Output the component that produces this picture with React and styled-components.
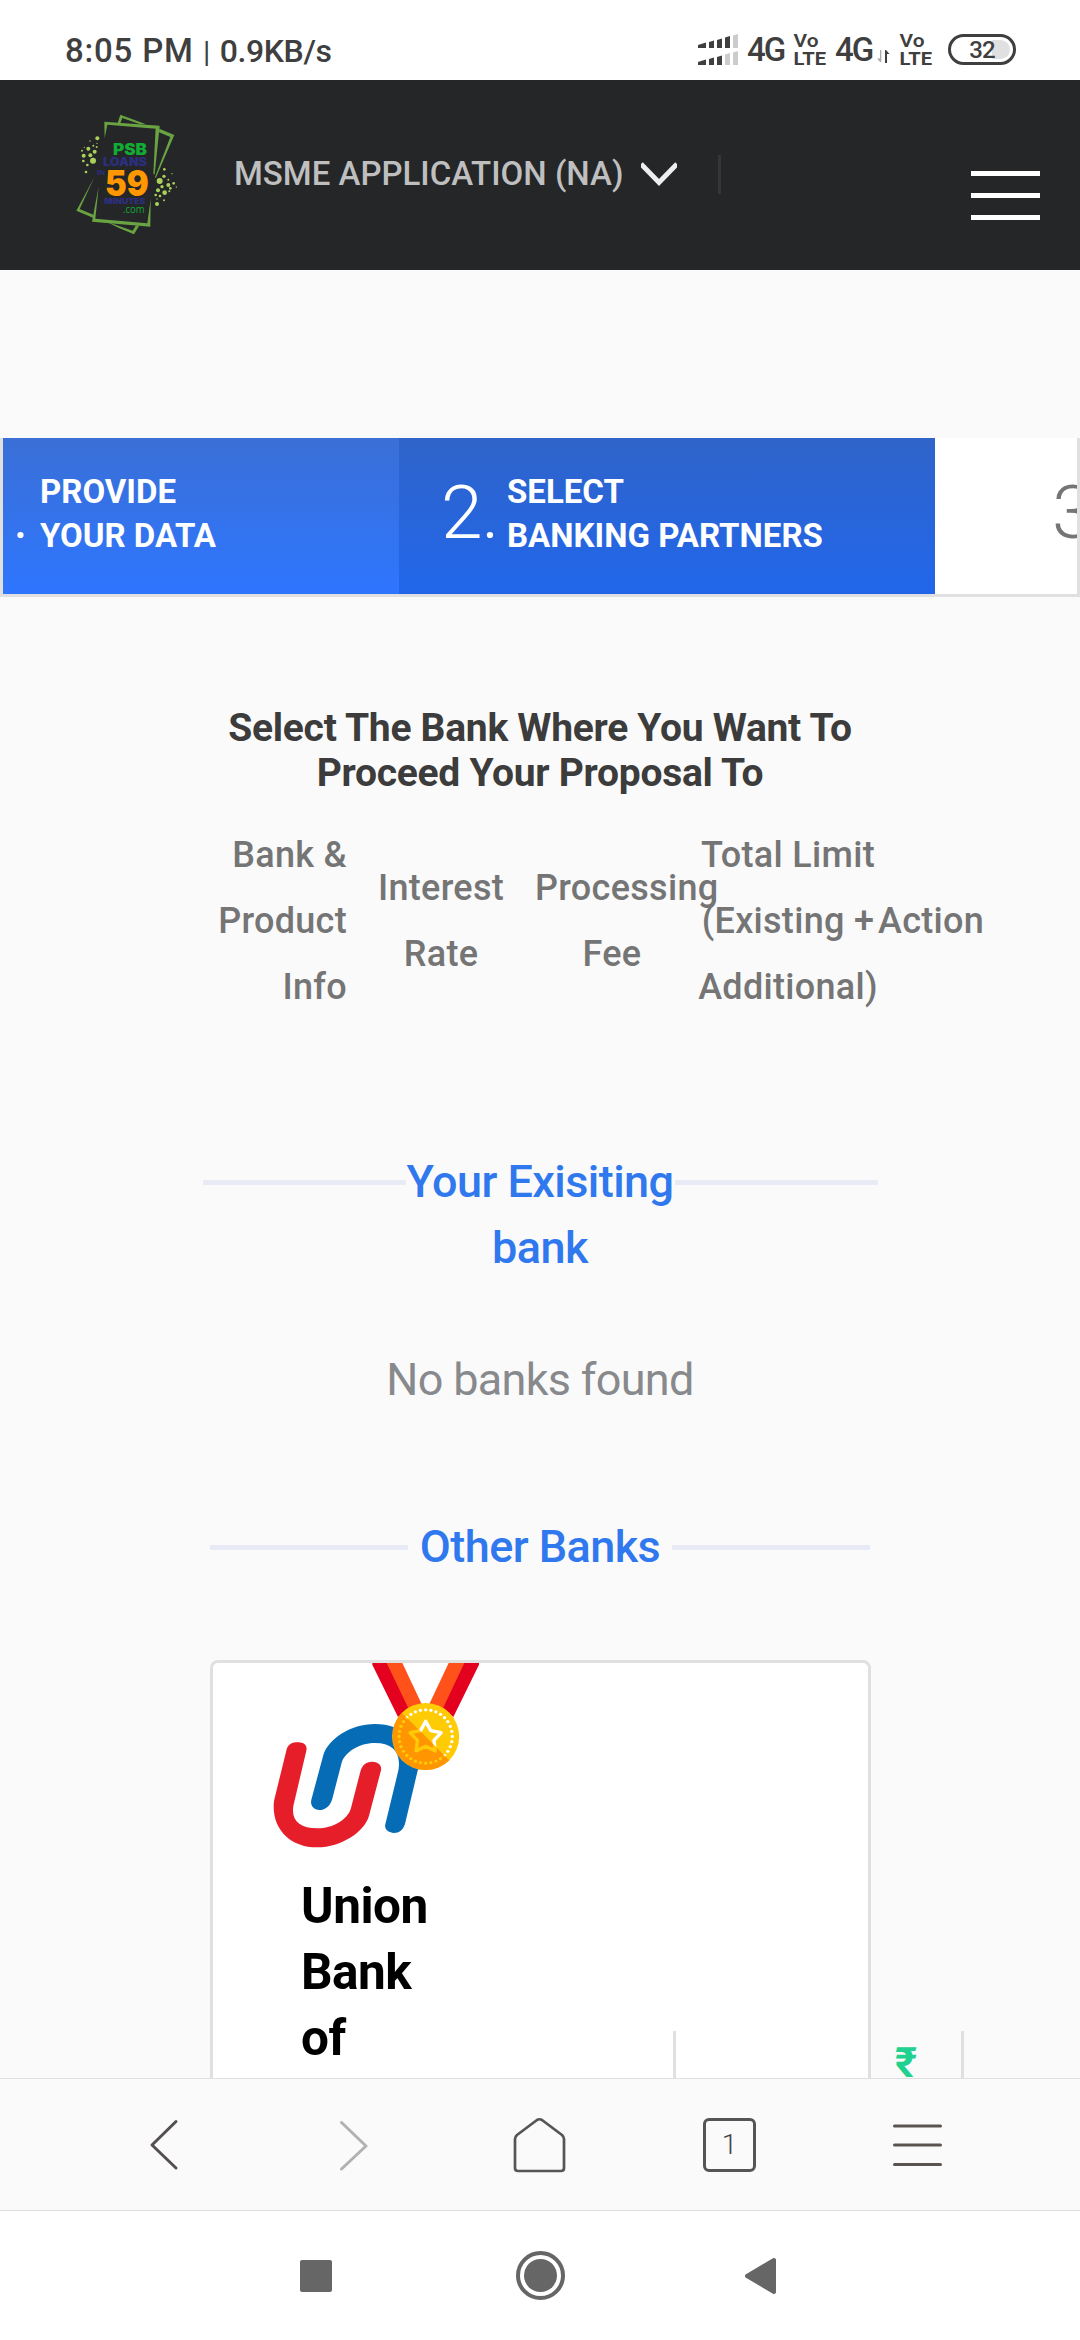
import React from "react";
import styled, { createGlobalStyle } from "styled-components";

const GlobalStyle = createGlobalStyle`
  * { box-sizing: border-box; }
  body {
    margin: 0;
    background: #fafafa;
    font-family: Roboto, "Noto Sans", sans-serif;
  }
  svg { display: block; flex: none; }
`;

const Screen = styled.div`
  width: 1080px;
  height: 2340px;
  display: flex;
  flex-direction: column;
  overflow: hidden;
  background: #fafafa;
`;

/* ---------- Status bar ---------- */

const StatusBar = styled.div`
  height: 80px;
  flex: none;
  display: flex;
  justify-content: space-between;
  padding: 31px 64px 0 65px;
  background: #fff;
  color: #3f3f3f;
`;

const Clock = styled.div`
  display: flex;
  align-items: baseline;
  height: 40px;
  line-height: 40px;
  font-weight: 500;
  white-space: nowrap;
`;

const Time = styled.span`
  font-size: 33px;
  letter-spacing: 0.8px;
`;

const Pipe = styled.span`
  width: 26px;
  text-align: center;
  font-size: 30px;
  font-weight: 400;
`;

const Speed = styled.span`
  font-size: 32px;
  letter-spacing: -0.4px;
`;

const StatusIcons = styled.div`
  display: flex;
  height: 40px;
`;

const SignalIcon = styled.svg`
  margin: 3px 8px 0 0;
`;

const Network = styled.span`
  width: ${(p) => p.$width}px;
  font-size: 33px;
  line-height: 38px;
  font-weight: 500;
  letter-spacing: -2px;
`;

const Lte = styled.svg`
  margin: 2px ${(p) => p.$after}px 0 0;
  overflow: visible;
  font-family: Roboto, sans-serif;
  font-weight: 700;
`;

const Arrows = styled.svg`
  margin: 18px 9px 0 0;
`;

const Battery = styled.div`
  width: 68px;
  height: 31px;
  margin-top: 3px;
  padding: 3px;
  border: 3px solid #3f3f3f;
  border-radius: 16px;
`;

const BatteryLevel = styled.div`
  height: 19px;
  border-radius: 10px;
  background: linear-gradient(90deg, #fff 68%, #e0e0e0 68%);
  text-align: center;
  font-size: 24px;
  line-height: 20px;
  font-weight: 500;
  letter-spacing: -1px;
`;

/* ---------- Site header ---------- */

const Header = styled.header`
  height: 190px;
  flex: none;
  display: flex;
  align-items: flex-start;
  padding: 0 40px 0 76px;
  background: #252628;
`;

const Brand = styled.svg`
  margin-top: 33px;
`;

const AppMenu = styled.div`
  display: flex;
  margin: 74px 0 0 54px;
  height: 42px;
  line-height: 40px;
  font-size: 33px;
  font-weight: 500;
  color: #bfbfbf;
  white-space: nowrap;
`;

const AppName = styled.span`
  width: 407px;
`;

const Chevron = styled.svg`
  margin-top: 7px;
`;

const Rule = styled.span`
  width: 3px;
  height: 39px;
  margin: 1px 0 0 41px;
  background: #343638;
`;

const Burger = styled.div`
  display: flex;
  flex-direction: column;
  gap: 17px;
  margin: 91px 0 0 auto;
`;

const BurgerBar = styled.span`
  width: 69px;
  height: 5px;
  background: #fff;
`;

/* ---------- Page ---------- */

const Main = styled.main`
  height: 1808px;
  flex: none;
  overflow: hidden;
  padding-top: 168px;
`;

const Steps = styled.div`
  display: flex;
  height: 159px;
  border: solid #e0e0e0;
  border-width: 0 3px 3px 3px;
  overflow: hidden;
`;

const Step = styled.div`
  width: ${(p) => p.$width}px;
  flex: none;
  display: flex;
  padding-left: ${(p) => p.$pad}px;
  background: ${(p) => p.$bg};
  color: ${(p) => p.$color || "#fff"};
`;

const StepNumber = styled.span`
  width: ${(p) => p.$width}px;
  padding-top: 34px;
  font-size: 75px;
  line-height: 80px;
  font-weight: 300;
  letter-spacing: -1px;
`;

const StepLabel = styled.div`
  padding-top: 32px;
  font-size: 33px;
  line-height: 44px;
  font-weight: 700;
  white-space: nowrap;
`;

const Title = styled.h1`
  margin: 109px 0 0;
  font-size: 39px;
  line-height: 45px;
  font-weight: 700;
  letter-spacing: -0.28px;
  color: #3c3c3c;
  text-align: center;
`;

const TableHead = styled.div`
  display: grid;
  grid-template-columns: 136px 188px 154px 198px 110px;
  align-items: center;
  height: 198px;
  margin: 26px 0 0 211px;
  font-size: 36px;
  line-height: 66px;
  font-weight: 500;
  letter-spacing: 0.3px;
  color: #757575;
  white-space: nowrap;
`;

const HeadCell = styled.div`
  display: flex;
  flex-direction: column;
  align-items: ${(p) => p.$align || "center"};
`;

const LastCell = styled(HeadCell)`
  margin-left: -9px;
`;

const FirstLine = styled.span`
  align-self: flex-start;
`;

const Section = styled.div`
  display: flex;
  width: ${(p) => p.$width}px;
  margin: ${(p) => p.$top}px auto 0;
  justify-content: space-between;
`;

const SectionLine = styled.span`
  width: ${(p) => p.$width}px;
  height: 5px;
  margin-top: 31px;
  background: #e8eaf6;
`;

const SectionTitle = styled.h2`
  margin: 0 -6px;
  font-size: 45px;
  line-height: 66px;
  font-weight: 500;
  letter-spacing: -0.57px;
  color: #3078ed;
  text-align: center;
  white-space: nowrap;
`;

const Empty = styled.p`
  margin: 66px 0 0;
  font-size: 45px;
  line-height: 66px;
  letter-spacing: -0.7px;
  color: #88898c;
  text-align: center;
`;

const Card = styled.article`
  display: flex;
  width: 661px;
  height: 600px;
  margin: 80px 0 0 210px;
  border: 3px solid #e0e0e0;
  border-radius: 8px;
  background: #fff;
`;

const BankCell = styled.div`
  width: 460px;
  flex: none;
  padding-left: 60px;
`;

const BankName = styled.h3`
  width: 130px;
  margin: 25px 0 0 28px;
  font-size: 49.5px;
  line-height: 66px;
  font-weight: 700;
  letter-spacing: -0.5px;
  color: #000;
`;

const ValueCell = styled.div`
  width: ${(p) => p.$width}px;
  flex: none;
  margin-top: 368px;
  padding: 10px 0 0 219px;
  border-left: 3px solid #e0e0e0;
  font-size: 42px;
  line-height: 44px;
  font-weight: 700;
  color: #21d18f;
`;

/* ---------- Browser toolbar and system navigation ---------- */

const Toolbar = styled.nav`
  height: 133px;
  flex: none;
  display: flex;
  align-items: center;
  padding: 0 137px 0 148px;
  border: solid #dfdfdf;
  border-width: 1px 0;
  background: #fafafa;
`;

const ToolSlot = styled.div`
  margin-left: ${(p) => p.$gap || 0}px;
`;

const Tabs = styled.div`
  width: 54px;
  height: 54px;
  margin-left: 137px;
  border: 3px solid #555;
  border-radius: 6px;
  font-size: 28px;
  line-height: 48px;
  font-weight: 300;
  color: #444;
  text-align: center;
`;

const SystemNav = styled.nav`
  flex: 1;
  display: flex;
  align-items: center;
  padding-left: 300px;
  background: #fff;
`;

const LEFT_DOTS = [
  [112, 116, 6], [90, 124, 2], [111, 131, 2], [100, 138, 3], [110, 142, 3], [85, 147, 6],
  [73, 143, 2], [66, 153, 3], [104, 156, 6], [71, 168, 6], [91, 167, 6], [99, 183, 9],
  [70, 184, 4], [82, 196, 4], [78, 217, 4],
];

const RIGHT_DOTS = [
  [313, 209, 4], [336, 222, 2], [312, 230, 5], [299, 244, 9], [325, 240, 3], [325, 256, 6],
  [306, 261, 5], [341, 251, 4], [349, 262, 2], [331, 266, 4], [294, 272, 6], [314, 279, 7],
  [328, 275, 3], [287, 286, 4], [300, 289, 4], [312, 302, 3], [291, 313, 6], [291, 298, 2],
];

function BrandLogo() {
  return (
    <Brand width="104" height="122" viewBox="48 40 312 366">
      <g fill="#6aa342">
        <path d="M133 66 298 78 297 88 142 75 134 116Z" />
        <path d="M287 82 299 80 284 224 280 224Z" />
        <path d="M181 45 258 74 240 74 187 55 181 71 173 70Z" />
        <path d="M298 87 343 106 287 236 285 232 331 112 297 98Z" />
        <path d="M103 233 59 328 100 345 99 354 49 333Z" />
        <path d="M116 260 106 357 262 371 272 298 271 381 96 366Z" />
        <path d="M140 366 218 393 228 377 237 379 222 404 175 384Z" />
      </g>
      <g fill="#a9d15a">
        {[...LEFT_DOTS, ...RIGHT_DOTS].map(([x, y, r]) => (
          <circle key={`${x}-${y}`} cx={x} cy={y} r={r} />
        ))}
      </g>
      <g fontFamily="Inter, 'Liberation Sans', sans-serif" fontWeight="900">
        <text x="159" y="165" fontSize="46" fill="#12ab34" textLength="102" lengthAdjust="spacingAndGlyphs">PSB</text>
        <text x="129" y="198" fontSize="34" fill="#2c2f7e" textLength="132" lengthAdjust="spacingAndGlyphs">LOANS</text>
        <text x="110" y="225" fontSize="19" fontWeight="700" fill="#2c2f7e" textLength="25" lengthAdjust="spacingAndGlyphs">IN</text>
        <text x="135" y="288" fontSize="106" fill="#ff9800" textLength="131" lengthAdjust="spacingAndGlyphs">59</text>
        <text x="133" y="312" fontSize="22" fill="#2c2f7e" textLength="123" lengthAdjust="spacingAndGlyphs">MINUTES</text>
      </g>
      <text x="189" y="339" fontSize="34" fontFamily="'Open Sans', sans-serif" fill="#12ab34" textLength="65" lengthAdjust="spacingAndGlyphs">.com</text>
    </Brand>
  );
}

function Signal() {
  const row = (y, full) => (
    <g transform={`translate(0 ${y})`}>
      <path d="M0 11 8 8.500V14H0Z" />
      <path d="M11 8 16 6.500V14H11Z" />
      <path d="M19 6 24 4.500V14H19Z" />
      <path d="M27 3.500 32 2V14H27Z" fill={full ? "#3f3f3f" : "#ccc"} />
      <path d="M35 1.500 40 0V14H35Z" fill="#ccc" />
    </g>
  );
  return (
    <SignalIcon width="41" height="32" viewBox="0 0 41 32" fill="#3f3f3f">
      {row(0, true)}
      {row(17, false)}
    </SignalIcon>
  );
}

function VoLte({ after }) {
  return (
    <Lte width="34" height="34" viewBox="0 0 34 34" fill="#3f3f3f" $after={after}>
      <text x="0.5" y="13.5" fontSize="17.5" fontWeight="600" textLength="25" lengthAdjust="spacingAndGlyphs">Vo</text>
      <text x="0.5" y="31.500" fontSize="18" textLength="32.500" lengthAdjust="spacingAndGlyphs">LTE</text>
    </Lte>
  );
}

function UnionLogo() {
  const dots = Array.from({ length: 32 }, (_, i) => (i * Math.PI) / 16);
  const star = Array.from({ length: 10 }, (_, i) => {
    const r = i % 2 ? 26 : 49;
    const a = (i * Math.PI) / 5 - Math.PI / 2;
    return `${677 + r * Math.cos(a)},${293 + r * Math.sin(a)}`;
  }).join(" ");
  const marks = (color) => (
    <>
      {dots.map((a) => (
        <circle key={a} cx={677 + 80 * Math.cos(a)} cy={289.5 + 80 * Math.sin(a)} r="5" fill={color} />
      ))}
      <polygon points={star} fill="none" stroke={color} strokeWidth="10" strokeLinejoin="round" />
    </>
  );
  return (
    <svg width="206" height="185" viewBox="219 69 618 555">
      <defs>
        <clipPath id="shade">
          <path d="M577 190 777 390H577Z" />
        </clipPath>
      </defs>
      <path
        fill="#e61e2a"
        d="M260 328C265 312 277 307 293 307C311 307 323 315 319 332L283 485C280 495 279 503 279 512C279 545 305 565 352 565C399 565 444 538 453 504L481 395C486 375 498 365 516 365C535 366 546 375 543 391L507 527C495 574 424 622 352 622C272 622 221 570 221 500C221 489 222 480 225 470Z"
      />
      <path
        fill="#076cb6"
        d="M334 479L370 345C385 297 451 252 525 252C609 252 656 304 656 371C656 380 654 388 652 396L615 552C609 570 598 579 582 579C566 578 552 568 556 553L593 400C596 390 597 380 597 370C596 330 572 309 524 309C477 309 435 337 425 368L397 476C391 497 377 510 358 510C340 509 330 496 334 479Z"
      />
      <path fill="#e4001f" d="M517 69H563L627 203 594 231 517 74ZM791 69H837V74L760 231 727 203Z" />
      <path fill="#ff511a" d="M560 69H607L665 192 625 205ZM746 69H793L729 205 688 192Z" />
      <circle cx="677" cy="289.5" r="100.5" fill="#ffcb05" />
      {marks("#fff")}
      <g clipPath="url(#shade)">
        <circle cx="677" cy="289.5" r="100.5" fill="#ff9500" />
        {marks("#ffcb05")}
      </g>
    </svg>
  );
}

export default function App() {
  return (
    <Screen>
      <GlobalStyle />
      <StatusBar>
        <Clock>
          <Time>8:05 PM</Time>
          <Pipe>|</Pipe>
          <Speed>0.9KB/s</Speed>
        </Clock>
        <StatusIcons>
          <Signal />
          <Network $width={46}>4G</Network>
          <VoLte after={8} />
          <Network $width={42}>4G</Network>
          <Arrows width="13" height="15" viewBox="0 0 13 15">
            <path d="M4.300 1V13H3L0 9.500H3V1Z" fill="#aaa" />
            <path d="M8 14V1H9L12.500 5H10V14Z" fill="#3f3f3f" />
          </Arrows>
          <VoLte after={15} />
          <Battery>
            <BatteryLevel>32</BatteryLevel>
          </Battery>
        </StatusIcons>
      </StatusBar>

      <Header>
        <BrandLogo />
        <AppMenu>
          <AppName>MSME APPLICATION (NA)</AppName>
          <Chevron width="36" height="28" viewBox="0 0 36 28">
            <path d="M0 3 18 21.500 36 3" fill="none" stroke="#eee" strokeWidth="5" />
          </Chevron>
          <Rule />
        </AppMenu>
        <Burger>
          <BurgerBar />
          <BurgerBar />
          <BurgerBar />
        </Burger>
      </Header>

      <Main>
        <Steps>
          <Step $width={396} $pad={9} $bg="linear-gradient(#3a6fd6, #2e76ff)">
            <StepNumber $width={28}>.</StepNumber>
            <StepLabel>
              PROVIDE
              <br />
              YOUR DATA
            </StepLabel>
          </Step>
          <Step $width={536} $pad={42} $bg="linear-gradient(#2f64ca, #2166ea)">
            <StepNumber $width={66}>2.</StepNumber>
            <StepLabel>
              SELECT
              <br />
              BANKING PARTNERS
            </StepLabel>
          </Step>
          <Step $width={300} $pad={117} $bg="#fff" $color="#757575">
            <StepNumber $width={67}>3</StepNumber>
          </Step>
        </Steps>

        <Title>
          Select The Bank Where You Want To
          <br />
          Proceed Your Proposal To
        </Title>

        <TableHead>
          <HeadCell $align="flex-end">
            <span>Bank &amp;</span>
            <span>Product</span>
            <span>Info</span>
          </HeadCell>
          <HeadCell>
            <span>Interest</span>
            <span>Rate</span>
          </HeadCell>
          <HeadCell>
            <FirstLine>Processing</FirstLine>
            <span>Fee</span>
          </HeadCell>
          <HeadCell>
            <span>Total Limit</span>
            <span>(Existing +</span>
            <span>Additional)</span>
          </HeadCell>
          <LastCell $align="flex-start">
            <span>Action</span>
          </LastCell>
        </TableHead>

        <Section $width={675} $top={129}>
          <SectionLine $width={203} />
          <SectionTitle>
            Your Exisiting
            <br />
            bank
          </SectionTitle>
          <SectionLine $width={203} />
        </Section>
        <Empty>No banks found</Empty>
        <Section $width={661} $top={101}>
          <SectionLine $width={198} />
          <SectionTitle>Other Banks</SectionTitle>
          <SectionLine $width={198} />
        </Section>

        <Card>
          <BankCell>
            <UnionLogo />
            <BankName>Union Bank of</BankName>
          </BankCell>
          <ValueCell $width={288}>₹</ValueCell>
          <ValueCell $width={100} />
        </Card>
      </Main>

      <Toolbar>
        <ToolSlot>
          <svg width="31" height="52" viewBox="0 0 31 52" fill="none" stroke="#555050" strokeWidth="3" strokeLinecap="round" strokeLinejoin="round">
            <path d="M28 2.500 4 26 28 49" />
          </svg>
        </ToolSlot>
        <ToolSlot $gap={160}>
          <svg width="31" height="52" viewBox="0 0 31 52" fill="none" stroke="#b2b2b2" strokeWidth="3" strokeLinecap="round" strokeLinejoin="round">
            <path d="M2.500 3.500 27 27 2.500 50" />
          </svg>
        </ToolSlot>
        <ToolSlot $gap={142}>
          <svg width="54" height="58" viewBox="0 0 54 58" fill="none" stroke="#555" strokeWidth="2.700" strokeLinejoin="round">
            <path d="M25 4Q27.500 2.500 30 4L50 19Q52 21 52 23V52Q52 55 49 55H6Q3 55 3 52V23Q3 21 5 19Z" />
          </svg>
        </ToolSlot>
        <Tabs>1</Tabs>
        <ToolSlot $gap={137}>
          <svg width="50" height="44" viewBox="0 0 50 44" stroke="#5a5350" strokeWidth="3" strokeLinecap="round">
            <path d="M1.500 3H47.500M1.500 22H47.500M1.500 41.500H47.500" />
          </svg>
        </ToolSlot>
      </Toolbar>

      <SystemNav>
        <svg width="32" height="32" viewBox="0 0 32 32">
          <rect width="32" height="32" rx="2" fill="#666" />
        </svg>
        <ToolSlot $gap={184}>
          <svg width="49" height="49" viewBox="0 0 49 49">
            <circle cx="24.500" cy="24.500" r="22.500" fill="none" stroke="#666" strokeWidth="4" />
            <circle cx="24.500" cy="24.500" r="16.500" fill="#666" />
          </svg>
        </ToolSlot>
        <ToolSlot $gap={180}>
          <svg width="31" height="38" viewBox="0 0 31 38">
            <path d="M2 19 29 3V35Z" fill="#666" stroke="#666" strokeWidth="4" strokeLinejoin="round" />
          </svg>
        </ToolSlot>
      </SystemNav>
    </Screen>
  );
}
